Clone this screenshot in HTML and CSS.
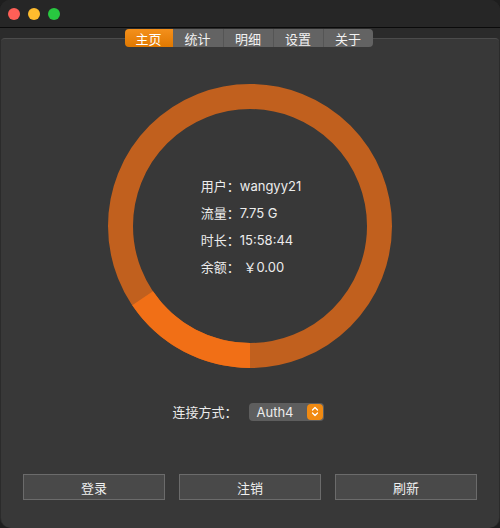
FILE: index.html
```html
<!DOCTYPE html>
<html lang="zh">
<head>
  <meta charset="UTF-8">
  <title>主页</title>
  <link rel="stylesheet" href="styles.css">
</head>
<body>
  <div class="window">
    <div class="titlebar">
      <span class="light red"></span>
      <span class="light yellow"></span>
      <span class="light green"></span>
    </div>
    <div class="panel">
      <ul class="tabs">
        <li class="active">主页</li>
        <li>统计</li>
        <li>明细</li>
        <li>设置</li>
        <li>关于</li>
      </ul>
      <div class="ring-wrap">
        <svg class="ring" width="284" height="284" viewBox="0 0 284 284">
          <circle cx="142" cy="142" r="129.5" fill="none" stroke="#c1601e" stroke-width="25"/>
          <!-- used share, starts at 6 o'clock going clockwise -->
          <circle cx="142" cy="142" r="129.5" fill="none" stroke="#f16f16" stroke-width="25"
            stroke-dasharray="126.6 1000" transform="rotate(90 142 142)"/>
        </svg>
        <div class="info">
          <p>用户：wangyy21</p>
          <p>流量：7.75 G</p>
          <p>时长：15:58:44</p>
          <p>余额： ￥0.00</p>
        </div>
      </div>
      <div class="mode">
        <span>连接方式：</span>
        <div class="popup">
          <span>Auth4</span>
          <span class="stepper">
            <svg width="8" height="11" viewBox="0 0 8 11"><path d="M1.5 4 L4 1.5 L6.5 4 M1.5 7 L4 9.5 L6.5 7" fill="none" stroke="#fff" stroke-width="1.3" stroke-linecap="round" stroke-linejoin="round"/></svg>
          </span>
        </div>
      </div>
      <div class="buttons">
        <button>登录</button>
        <button>注销</button>
        <button>刷新</button>
      </div>
    </div>
  </div>
</body>
</html>
```

FILE: styles.css
```css
body { margin: 0; background: #1e1e1e; font-family: "Inter", "Noto Sans CJK SC", sans-serif; font-size: 13px; color: #ececec; }
.window { width: 500px; height: 528px; background: #2b2b2b; border-radius: 10px; overflow: hidden; display: flex; flex-direction: column; }
.titlebar { height: 27px; background: #262626; border-bottom: 1px solid #0a0a0a; display: flex; align-items: center; gap: 8px; padding-left: 8px; flex-shrink: 0; }
.light { width: 12px; height: 12px; border-radius: 50%; }
.red { background: #fe5f57; }
.yellow { background: #febc2e; }
.green { background: #28c840; }

.panel { flex: 1; margin: 10px 1px 0; background: #383838; border-top: 1px solid #4c4c4c; border-radius: 4px 4px 10px 10px; display: flex; flex-direction: column; align-items: center; }
.tabs { list-style: none; margin: -10px 0 0 -3px; padding: 0; display: flex; height: 18px; border-radius: 4px; overflow: hidden; }
.tabs li { width: 50px; display: flex; align-items: center; justify-content: center; background: #636363; color: #f2f2f2; border-left: 1px solid #555; box-sizing: border-box; }
.tabs li:first-child { border-left: none; width: 48px; }
.tabs li.active { background: linear-gradient(#f4901c, #e07800); color: #fff; }
.tabs li.active + li { border-left: none; }

.ring-wrap { margin-top: 37px; display: grid; place-items: center; }
.ring, .info { grid-area: 1 / 1; }
.info { margin: 2px 0 0 2px; }
.info p { margin: 0; height: 27px; line-height: 27px; }

.mode { margin: 34px 4px 0 0; display: flex; align-items: center; gap: 11px; }
.popup { width: 75px; height: 18px; background: #5e5e5e; border-radius: 4px; display: flex; align-items: center; justify-content: space-between; padding-left: 8px; box-sizing: border-box; }
.stepper { width: 16px; height: 16px; margin-right: 1px; background: #f08a12; border-radius: 4px; display: flex; align-items: center; justify-content: center; }

.buttons { margin-top: 53px; display: flex; gap: 14px; }
.buttons button { width: 142px; height: 26px; background: #494949; border: 1px solid #6b6b6b; color: #f0f0f0; font: inherit; padding: 0; }
```
